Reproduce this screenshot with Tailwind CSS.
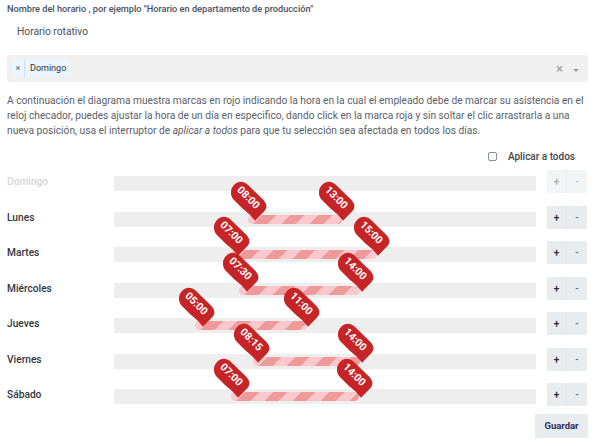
<!DOCTYPE html>
<html lang="es">
<head>
    <meta charset="UTF-8">
    <meta name="viewport" content="width=device-width, initial-scale=1.0">
    <title>Horario</title>
    <script src="https://cdn.jsdelivr.net/npm/@tailwindcss/browser@4"></script>
</head>
<body class="bg-white font-['Roboto',sans-serif] text-[#495057] overflow-hidden">

    <svg class="hidden">
        <symbol id="pin" viewBox="0 0 36 40">
            <path fill="#c62426" d="M2.5 18.5 C-1 14.5 -1 8 3 4 C7 0 12 -0.5 16.5 3.5 L32 18.5 C36 22.5 36.5 26.5 33.5 30 L24 39.8 C20.5 35 16.5 31.5 11.5 27.5 Z"/>
        </symbol>
    </svg>

    <div class="h-[446px] px-[7px] overflow-hidden">
        <p class="pt-[2px] text-[9.2px] leading-[13px] font-medium text-[#4a5160]">Nombre del horario , por ejemplo "Horario en departamento de producción"</p>
        <p class="mt-[9px] pl-[10px] text-[10.25px] leading-[15px] text-[#4a4f57]">Horario rotativo</p>

        <div class="mt-[16px] h-[27px] bg-[#f0f0f0] rounded-[3px] flex items-center pl-[5px] pr-[9px]">
            <span class="flex items-center h-[17px] bg-[#ebf5ff] rounded-[2px] text-[9px] text-[#333]">
                <span class="w-[13px] text-center text-[9px] text-[#3c5a80] border-r border-[#c2e0ff] leading-[17px]">×</span>
                <span class="pl-[5px] pr-[4px]">Domingo</span>
            </span>
            <span class="ml-auto text-[#999] text-[13px] leading-none">×</span>
            <span class="ml-[10px] w-0 h-0 border-x-[3px] border-x-transparent border-t-[3px] border-t-[#999] mt-[3px]"></span>
        </div>

        <p class="mt-[11px] text-[10.2px] leading-[15px] text-[#5a6068]">A continuación el diagrama muestra marcas en rojo indicando la hora en la cual el empleado debe de marcar su asistencia en el reloj checador, puedes ajustar la hora de un día en especifico, dando click en la marca roja y sin soltar el clic arrastrarla a una nueva posición, usa el interruptor de <em>aplicar a todos</em> para que tu selección sea afectada en todos los días.</p>

        <label class="mt-[11px] flex items-center justify-end pr-[13px] h-[15px] text-[10px] font-medium text-[#3f444b]">
            <span class="w-[9px] h-[9px] border border-[#8a8f96] rounded-[2px] bg-white"></span>
            <span class="ml-[11px]">Aplicar a todos</span>
        </label>

        <div class="mt-[6px] flex flex-col gap-[12.5px]">
            <div class="flex h-[23px]">
                <span class="w-[107px] mt-[5px] text-[10.2px] leading-[14px] font-medium text-[#d4d6d9]">Domingo</span>
                <div class="relative w-[422px] h-[15px] mt-[6px] bg-[#eeeeee]"></div>
                <div class="ml-[11px] w-[40px] flex bg-[#f3f4f6] text-[10px] font-medium text-[#a3a8ae] leading-[23px] text-center">
                    <span class="w-[20px] border-r border-[#e9ecef]">+</span><span class="w-[20px] text-[#b5b9be]">-</span>
                </div>
            </div>

            <div class="flex h-[23px]">
                <span class="w-[107px] mt-[5px] text-[10.2px] leading-[14px] font-medium text-[#33373d]">Lunes</span>
                <div class="relative w-[422px] h-[15px] mt-[6px] bg-[#eeeeee]">
                    <div class="absolute left-[134px] w-[94px] top-[3px] h-[9px] rounded-[5px] bg-[repeating-linear-gradient(135deg,#fcc8cc_0,#fcc8cc_10px,#ee9a9a_10px,#ee9a9a_20px)]"></div>
                    <div class="absolute left-[117px] top-[-31px] w-[36px] h-[40px]"><svg class="w-full h-full"><use href="#pin"/></svg><span class="absolute left-[17px] top-[17px] -translate-x-1/2 -translate-y-1/2 rotate-45 text-[10.5px] font-bold text-white leading-none">08:00</span></div>
                    <div class="absolute left-[205px] top-[-31px] w-[36px] h-[40px]"><svg class="w-full h-full"><use href="#pin"/></svg><span class="absolute left-[17px] top-[17px] -translate-x-1/2 -translate-y-1/2 rotate-45 text-[10.5px] font-bold text-white leading-none">13:00</span></div>
                </div>
                <div class="ml-[11px] w-[40px] flex bg-[#e9ecef] text-[10px] font-medium text-[#212529] leading-[23px] text-center">
                    <span class="w-[20px] border-r border-[#e2e5e8]">+</span><span class="w-[20px] text-[#6b7178]">-</span>
                </div>
            </div>

            <div class="flex h-[23px]">
                <span class="w-[107px] mt-[5px] text-[10.2px] leading-[14px] font-medium text-[#33373d]">Martes</span>
                <div class="relative w-[422px] h-[15px] mt-[6px] bg-[#eeeeee]">
                    <div class="absolute left-[117px] w-[146px] top-[3px] h-[9px] rounded-[5px] bg-[repeating-linear-gradient(135deg,#fcc8cc_0,#fcc8cc_10px,#ee9a9a_10px,#ee9a9a_20px)]"></div>
                    <div class="absolute left-[100px] top-[-31px] w-[36px] h-[40px]"><svg class="w-full h-full"><use href="#pin"/></svg><span class="absolute left-[17px] top-[17px] -translate-x-1/2 -translate-y-1/2 rotate-45 text-[10.5px] font-bold text-white leading-none">07:00</span></div>
                    <div class="absolute left-[240px] top-[-31px] w-[36px] h-[40px]"><svg class="w-full h-full"><use href="#pin"/></svg><span class="absolute left-[17px] top-[17px] -translate-x-1/2 -translate-y-1/2 rotate-45 text-[10.5px] font-bold text-white leading-none">15:00</span></div>
                </div>
                <div class="ml-[11px] w-[40px] flex bg-[#e9ecef] text-[10px] font-medium text-[#212529] leading-[23px] text-center">
                    <span class="w-[20px] border-r border-[#e2e5e8]">+</span><span class="w-[20px] text-[#6b7178]">-</span>
                </div>
            </div>

            <div class="flex h-[23px]">
                <span class="w-[107px] mt-[5px] text-[10.2px] leading-[14px] font-medium text-[#33373d]">Miércoles</span>
                <div class="relative w-[422px] h-[15px] mt-[6px] bg-[#eeeeee]">
                    <div class="absolute left-[125px] w-[121px] top-[3px] h-[9px] rounded-[5px] bg-[repeating-linear-gradient(135deg,#fcc8cc_0,#fcc8cc_10px,#ee9a9a_10px,#ee9a9a_20px)]"></div>
                    <div class="absolute left-[109px] top-[-31px] w-[36px] h-[40px]"><svg class="w-full h-full"><use href="#pin"/></svg><span class="absolute left-[17px] top-[17px] -translate-x-1/2 -translate-y-1/2 rotate-45 text-[10.5px] font-bold text-white leading-none">07:30</span></div>
                    <div class="absolute left-[224px] top-[-31px] w-[36px] h-[40px]"><svg class="w-full h-full"><use href="#pin"/></svg><span class="absolute left-[17px] top-[17px] -translate-x-1/2 -translate-y-1/2 rotate-45 text-[10.5px] font-bold text-white leading-none">14:00</span></div>
                </div>
                <div class="ml-[11px] w-[40px] flex bg-[#e9ecef] text-[10px] font-medium text-[#212529] leading-[23px] text-center">
                    <span class="w-[20px] border-r border-[#e2e5e8]">+</span><span class="w-[20px] text-[#6b7178]">-</span>
                </div>
            </div>

            <div class="flex h-[23px]">
                <span class="w-[107px] mt-[5px] text-[10.2px] leading-[14px] font-medium text-[#33373d]">Jueves</span>
                <div class="relative w-[422px] h-[15px] mt-[6px] bg-[#eeeeee]">
                    <div class="absolute left-[81px] w-[112px] top-[3px] h-[9px] rounded-[5px] bg-[repeating-linear-gradient(135deg,#fcc8cc_0,#fcc8cc_10px,#ee9a9a_10px,#ee9a9a_20px)]"></div>
                    <div class="absolute left-[65px] top-[-31px] w-[36px] h-[40px]"><svg class="w-full h-full"><use href="#pin"/></svg><span class="absolute left-[17px] top-[17px] -translate-x-1/2 -translate-y-1/2 rotate-45 text-[10.5px] font-bold text-white leading-none">05:00</span></div>
                    <div class="absolute left-[170px] top-[-31px] w-[36px] h-[40px]"><svg class="w-full h-full"><use href="#pin"/></svg><span class="absolute left-[17px] top-[17px] -translate-x-1/2 -translate-y-1/2 rotate-45 text-[10.5px] font-bold text-white leading-none">11:00</span></div>
                </div>
                <div class="ml-[11px] w-[40px] flex bg-[#e9ecef] text-[10px] font-medium text-[#212529] leading-[23px] text-center">
                    <span class="w-[20px] border-r border-[#e2e5e8]">+</span><span class="w-[20px] text-[#6b7178]">-</span>
                </div>
            </div>

            <div class="flex h-[23px]">
                <span class="w-[107px] mt-[5px] text-[10.2px] leading-[14px] font-medium text-[#33373d]">Viernes</span>
                <div class="relative w-[422px] h-[15px] mt-[6px] bg-[#eeeeee]">
                    <div class="absolute left-[139px] w-[107px] top-[3px] h-[9px] rounded-[5px] bg-[repeating-linear-gradient(135deg,#fcc8cc_0,#fcc8cc_10px,#ee9a9a_10px,#ee9a9a_20px)]"></div>
                    <div class="absolute left-[120px] top-[-31px] w-[36px] h-[40px]"><svg class="w-full h-full"><use href="#pin"/></svg><span class="absolute left-[17px] top-[17px] -translate-x-1/2 -translate-y-1/2 rotate-45 text-[10.5px] font-bold text-white leading-none">08:15</span></div>
                    <div class="absolute left-[224px] top-[-31px] w-[36px] h-[40px]"><svg class="w-full h-full"><use href="#pin"/></svg><span class="absolute left-[17px] top-[17px] -translate-x-1/2 -translate-y-1/2 rotate-45 text-[10.5px] font-bold text-white leading-none">14:00</span></div>
                </div>
                <div class="ml-[11px] w-[40px] flex bg-[#e9ecef] text-[10px] font-medium text-[#212529] leading-[23px] text-center">
                    <span class="w-[20px] border-r border-[#e2e5e8]">+</span><span class="w-[20px] text-[#6b7178]">-</span>
                </div>
            </div>

            <div class="flex h-[23px]">
                <span class="w-[107px] mt-[5px] text-[10.2px] leading-[14px] font-medium text-[#33373d]">Sábado</span>
                <div class="relative w-[422px] h-[15px] mt-[6px] bg-[#eeeeee]">
                    <div class="absolute left-[117px] w-[128px] top-[3px] h-[9px] rounded-[5px] bg-[repeating-linear-gradient(135deg,#fcc8cc_0,#fcc8cc_10px,#ee9a9a_10px,#ee9a9a_20px)]"></div>
                    <div class="absolute left-[100px] top-[-31px] w-[36px] h-[40px]"><svg class="w-full h-full"><use href="#pin"/></svg><span class="absolute left-[17px] top-[17px] -translate-x-1/2 -translate-y-1/2 rotate-45 text-[10.5px] font-bold text-white leading-none">07:00</span></div>
                    <div class="absolute left-[223px] top-[-31px] w-[36px] h-[40px]"><svg class="w-full h-full"><use href="#pin"/></svg><span class="absolute left-[17px] top-[17px] -translate-x-1/2 -translate-y-1/2 rotate-45 text-[10.5px] font-bold text-white leading-none">14:00</span></div>
                </div>
                <div class="ml-[11px] w-[40px] flex bg-[#e9ecef] text-[10px] font-medium text-[#212529] leading-[23px] text-center">
                    <span class="w-[20px] border-r border-[#e2e5e8]">+</span><span class="w-[20px] text-[#6b7178]">-</span>
                </div>
            </div>
        </div>

        <div class="mt-[8px] flex justify-end">
            <button class="w-[53px] h-[24px] bg-[#e9ecef] text-[9.5px] font-bold text-[#2f2c5c]">Guardar</button>
        </div>
    </div>
</body>
</html>
